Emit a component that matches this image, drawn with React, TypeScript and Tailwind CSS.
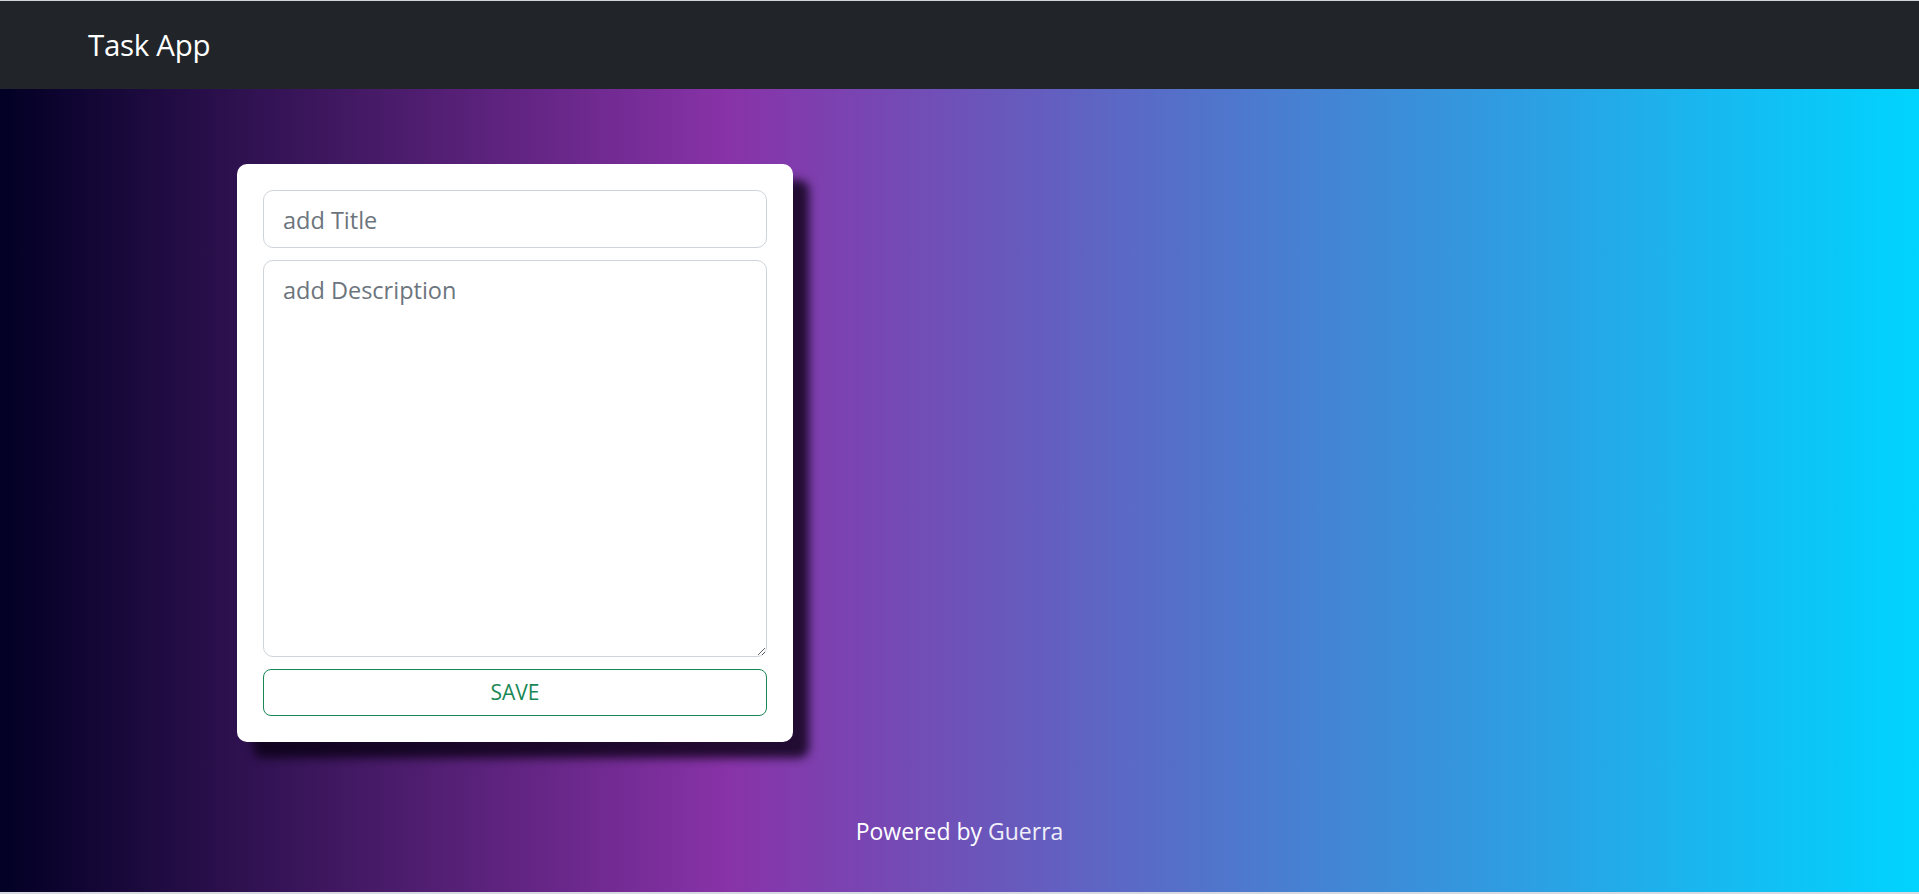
import React from "react";

export default function App() {
  return (
    <div
      className="w-full h-[894px] flex flex-col border-t border-[#d3d4d6] overflow-hidden"
      style={{ fontFamily: '"Open Sans", "Noto Sans", sans-serif' }}
    >
      <nav className="h-[88px] shrink-0 bg-[#212529] flex items-center pl-[88px]">
        <span className="text-white text-[29.5px] leading-none tracking-[-0.3px] pb-[1px]">Task App</span>
      </nav>
      <main className="h-[803px] shrink-0 flex flex-col bg-[linear-gradient(90deg,#020024_0%,#8833a8_38%,#00d4ff_100%)]">
        <div className="pl-[237px] pt-[75px]">
          <div className="w-[556px] h-[578px] bg-white rounded-[10px] p-[26px] pb-[25px] flex flex-col gap-[12px] shadow-[16px_16px_10px_rgba(10,0,20,0.8)]">
            <input
              type="text"
              placeholder="add Title"
              className="h-[58px] w-full shrink-0 rounded-[10px] border border-[#ced4da] px-[19px] pt-[1px] text-[23.5px] text-[#212529] placeholder:text-[#6c757d] outline-none bg-white"
            />
            <textarea
              placeholder="add Description"
              className="h-[397px] w-full shrink-0 rounded-[10px] border border-[#ced4da] px-[19px] pt-[12px] pb-[10px] text-[23.5px] leading-[1.5] text-[#212529] placeholder:text-[#6c757d] outline-none bg-white"
            />
            <button className="h-[47px] w-full shrink-0 rounded-[8px] border border-[#198754] text-[#198754] text-[21px] bg-white pt-[1px]">
              SAVE
            </button>
          </div>
        </div>
        <div className="flex-1" />
        <footer className="pb-[44px] text-center text-[23px] leading-[1.5] text-white">
          Powered by <span className="text-white/90">Guerra</span>
        </footer>
      </main>
      <div className="h-[2px] bg-[#d6dae0]" />
    </div>
  );
}
